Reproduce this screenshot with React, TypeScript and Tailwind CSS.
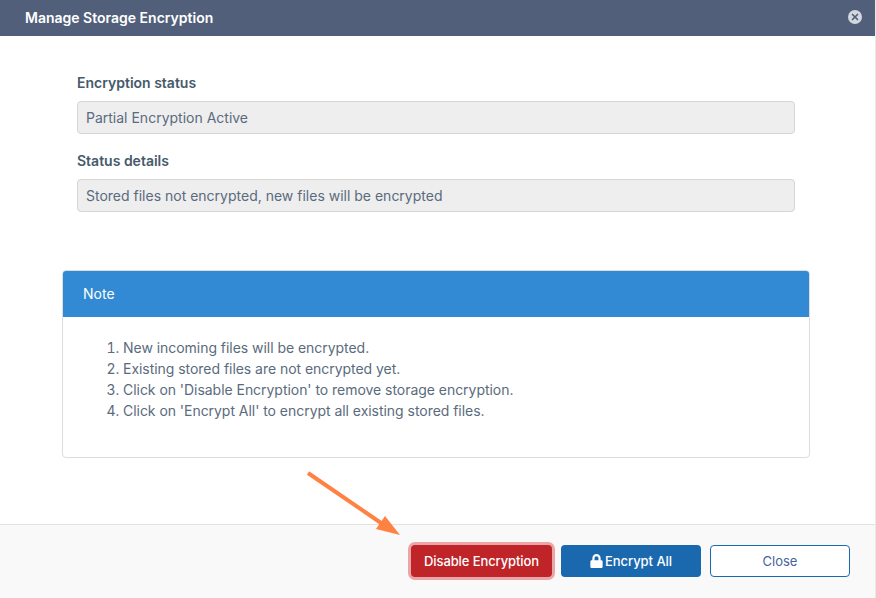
import React from 'react';
import { X } from 'lucide-react';
import { FaLock } from 'react-icons/fa';

const notes = [
  'New incoming files will be encrypted.',
  'Existing stored files are not encrypted yet.',
  "Click on 'Disable Encryption' to remove storage encryption.",
  "Click on 'Encrypt All' to encrypt all existing stored files.",
];

const App: React.FC = () => {
  return (
    <div className="relative flex h-[598px] w-[876px] flex-col overflow-hidden border-r border-[#e8e8e8] bg-white font-['Inter',sans-serif] text-[#5a6b7d]">
      {/* Header */}
      <div className="flex h-9 shrink-0 items-center justify-between bg-[#515f7b] pl-[25px] pr-[13px]">
        <h1 className="text-sm font-semibold text-white">Manage Storage Encryption</h1>
        <div className="mb-[3px] flex h-[14px] w-[14px] items-center justify-center rounded-full bg-[#d3d7de]">
          <X className="h-[10px] w-[10px] text-[#515f7b]" strokeWidth={4} />
        </div>
      </div>

      {/* Body */}
      <div className="flex flex-1 flex-col">
        <div className="flex flex-col px-[77px] pr-[80px] pt-[37px]">
          <label className="mb-[9px] h-[19px] text-sm font-semibold leading-[19px] text-[#465a6b]">Encryption status</label>
          <div className="flex h-[33px] items-center rounded border border-[#d5d5d5] bg-[#eeeeee] px-2 text-sm">
            Partial Encryption Active
          </div>
          <label className="mb-[9px] mt-[17px] h-[19px] text-sm font-semibold leading-[19px] text-[#465a6b]">Status details</label>
          <div className="flex h-[33px] items-center rounded border border-[#d5d5d5] bg-[#eeeeee] px-2 text-sm">
            Stored files not encrypted, new files will be encrypted
          </div>
        </div>

        {/* Note */}
        <div className="ml-[62px] mt-[58px] flex h-[188px] w-[748px] flex-col overflow-hidden rounded border border-[#dddddd]">
          <div className="flex h-[46px] shrink-0 items-center bg-[#318ad3] px-5 text-sm text-white">Note</div>
          <ol className="list-decimal pl-[60px] pt-[20px] text-sm leading-[21px] tracking-[-0.04px]">
            {notes.map((note) => (
              <li key={note}>{note}</li>
            ))}
          </ol>
        </div>
      </div>

      {/* Footer */}
      <div className="flex h-[74px] shrink-0 items-start justify-end gap-[9px] border-t border-[#e2e2e2] bg-[#f9f9f9] pr-[25px] pt-5">
        <button className="h-[32px] w-[141px] rounded bg-[#bf2429] pt-px text-[13px] font-medium tracking-[-0.1px] text-white ring-[3px] ring-[#e9a5a8]">
          Disable Encryption
        </button>
        <button className="flex h-[32px] w-[140px] items-center justify-center gap-[2px] rounded bg-[#1a69af] pt-px text-[13px] font-medium tracking-[-0.05px] text-white">
          <FaLock className="mb-px h-[14px] w-[13px]" />
          Encrypt All
        </button>
        <button className="h-[32px] w-[140px] rounded border border-[#1a69af] bg-white pt-px text-[13px] text-[#47639c]">
          Close
        </button>
      </div>

      {/* Annotation arrow */}
      <svg className="pointer-events-none absolute left-[300px] top-[465px] h-[80px] w-[110px]" viewBox="0 0 110 80">
        <line x1="8" y1="8" x2="84" y2="60" stroke="#ff8243" strokeWidth="4" />
        <polygon points="100,70 76,64 85,51" fill="#ff8243" />
      </svg>
    </div>
  );
};

export default App;
